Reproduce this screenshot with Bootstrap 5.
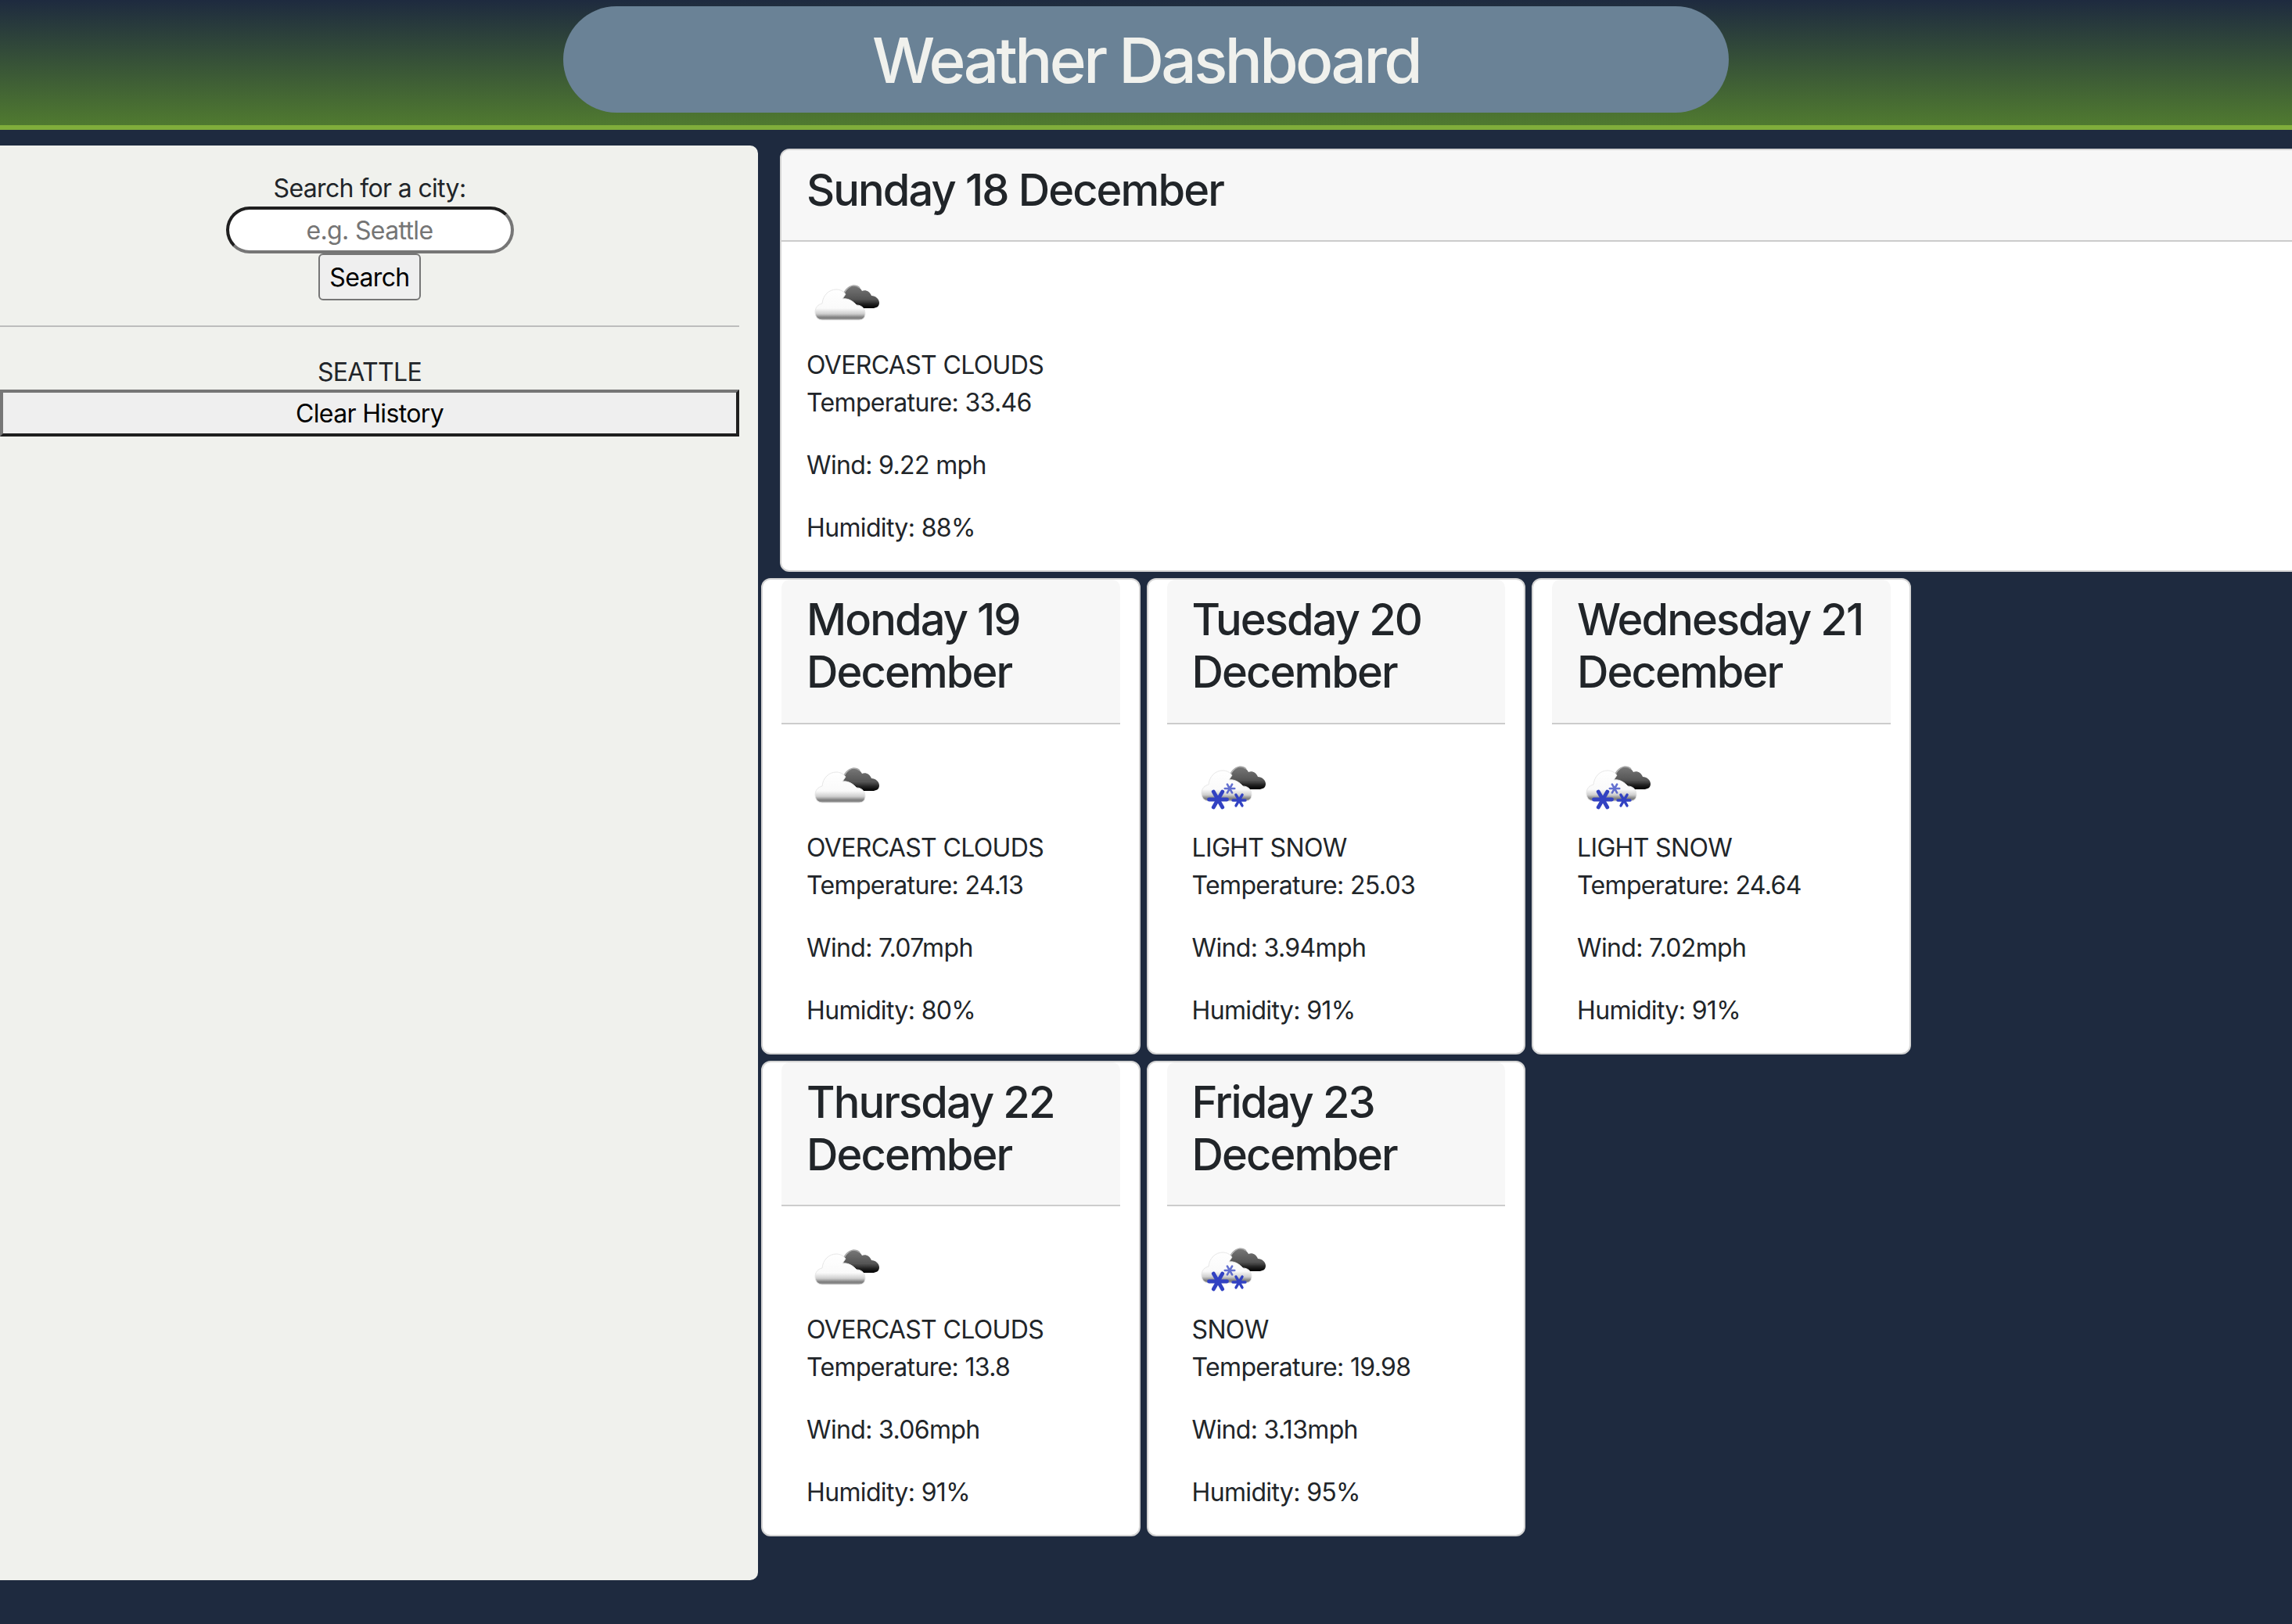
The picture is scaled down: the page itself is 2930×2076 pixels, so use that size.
<!DOCTYPE html>
<html lang="en">
  <head>
    <meta charset="UTF-8" />
    <meta name="viewport" content="width=device-width, initial-scale=1.0" />
    <title>Weather Dashboard</title>
    <link href="https://cdn.jsdelivr.net/npm/bootstrap@5.3.2/dist/css/bootstrap.min.css" rel="stylesheet" />
    <style>
      html {
        font-size: 32px;
        overflow-x: hidden;
      }
      body {
        background-color: #1e2a3f;
        color: #212529;
        font-family: Inter, "Liberation Sans", sans-serif;
        letter-spacing: -0.65px;
        overflow-x: hidden;
      }
      input,
      button {
        letter-spacing: inherit;
      }
      .page-head {
        height: 166px;
        background: linear-gradient(#1e2a3f, #507a30);
        border-bottom: 6px solid #80ae3b;
        padding-top: 8px;
      }
      .head-pill {
        width: 1490px;
        height: 136px;
        padding-top: 2px;
        background-color: #6a8296;
        color: #f0f1ed;
      }
      .head-pill h1 {
        font-size: 80px;
        font-weight: 550;
        letter-spacing: -3.6px;
      }
      .main-row {
        margin-top: 20px;
      }
      .side-panel {
        width: 969px;
        min-height: 1834px;
        padding: 31px 24px 0 0;
        background-color: #f0f1ed;
        border-radius: 0 10px 10px 0;
      }
      .side-panel label {
        margin-bottom: -1px;
      }
      .city-name {
        padding-top: 2px;
        margin-bottom: -2px;
      }
      .city-input {
        display: block;
        width: 368px;
        height: 60px;
        margin: 0 auto;
        border: 4px solid;
        border-color: #1f1f1f #767676 #767676 #1f1f1f;
        border-radius: 30px;
        background: #fff;
        text-align: center;
        font-size: 32px;
        line-height: 1;
        padding: 0 8px;
      }
      .city-input::placeholder {
        color: #757575;
      }
      .search-btn {
        display: block;
        width: 131px;
        height: 60px;
        margin: 0 auto;
        padding: 1px 0 0;
        border: 2px solid #767676;
        border-radius: 6px;
        background-color: #efefef;
        color: #000;
      }
      .side-rule {
        margin: 32px 0;
        border-top: 2px solid #bdbdbd;
        opacity: 1;
      }
      .clear-btn {
        display: block;
        width: 100%;
        height: 60px;
        padding: 2px 0 0;
        border: 4px solid;
        border-color: #767676 #1f1f1f #1f1f1f #767676;
        background-color: #efefef;
        color: #000;
      }
      .main-panel {
        padding: 4px 0 0 4px;
        min-width: 0;
      }
      .day-card {
        --bs-card-border-width: 2px;
        --bs-card-border-color: #d4d4d4;
        --bs-card-inner-border-radius: 10px;
        --bs-card-cap-bg: #f7f7f7;
        --bs-card-spacer-x: 32px;
        --bs-card-spacer-y: 32px;
        border-radius: 12px;
      }
      .day-card .card-header {
        padding-top: 18px;
        border-bottom: 2px solid #ccc;
      }
      .day-card h3 {
        margin-bottom: 14px;
        font-weight: 550;
        letter-spacing: -1.9px;
      }
      .day-card .card-body {
        padding-bottom: 30px;
      }
      .today-card {
        margin: 0 -40px 8px 24px;
      }
      .week-wrap {
        gap: 8px;
        max-width: 1480px;
      }
      .week-card {
        width: 484.5px;
      }
      .week-inner {
        margin: 0 24px;
      }
      .wx-icon {
        display: block;
        width: 100px;
        height: 100px;
        margin-bottom: 2px;
      }
      .wx-stats p:last-child {
        margin-bottom: 0;
      }
    </style>
  </head>
  <body>
    <!-- shared weather icons -->
    <svg width="0" height="0" class="position-absolute">
      <defs>
        <linearGradient id="whiteFill" x1="0" y1="0" x2="0" y2="1">
          <stop offset="0" stop-color="#fff" />
          <stop offset="0.62" stop-color="#fafafa" />
          <stop offset="0.8" stop-color="#cfcfcf" />
          <stop offset="0.92" stop-color="#7d7d7d" />
          <stop offset="1" stop-color="#9a9a9a" />
        </linearGradient>
        <linearGradient id="darkFill" x1="0" y1="0" x2="0" y2="1">
          <stop offset="0" stop-color="#777" />
          <stop offset="0.6" stop-color="#555" />
          <stop offset="0.85" stop-color="#1a1a1a" />
          <stop offset="1" stop-color="#000" />
        </linearGradient>
        <filter id="soft" x="-10%" y="-10%" width="120%" height="120%">
          <feGaussianBlur stdDeviation="0.7" />
        </filter>
        <g id="cloudPair">
          <path d="M46 41C48 32 54 25 60 24C65 24 69 27 71 31C76 29 81 32 83 37C88 37 93 41 93 46C93 51 89 53 84 53L68 53C62 47 56 41 46 41Z" fill="url(#darkFill)" />
          <path d="M44 41C47 32 53 25 60 24C63 24 66 25 68 27" fill="none" stroke="#a8a8a8" stroke-width="1.6" />
          <path d="M20 68C14 68 11 63 11 58C11 52 15 48 20 47C21 36 29 29 38 29C43 29 47 31 50 35L46 41C52 40 58 43 62 47L64 49C71 49 75 54 75 60C75 65 72 68 67 68Z" fill="url(#whiteFill)" stroke="#e6e6e6" stroke-width="1" />
        </g>
        <g id="flake" stroke="#3142c2" stroke-width="4.2" stroke-linecap="round">
          <line x1="-10" y1="0" x2="10" y2="0" />
          <line x1="-5" y1="-8.7" x2="5" y2="8.7" />
          <line x1="-5" y1="8.7" x2="5" y2="-8.7" />
          <circle cx="0" cy="0" r="3" fill="#3142c2" stroke="none" />
        </g>
        <symbol id="overcast" viewBox="0 0 100 100">
          <use href="#cloudPair" filter="url(#soft)" />
        </symbol>
        <symbol id="snowy" viewBox="0 0 100 100">
          <g filter="url(#soft)">
            <use href="#cloudPair" transform="translate(1 -2)" />
            <use href="#flake" transform="translate(33 64) scale(1.15)" />
            <use href="#flake" transform="translate(48 50) scale(0.62)" opacity="0.75" />
            <use href="#flake" transform="translate(60 65) scale(0.8)" />
          </g>
        </symbol>
      </defs>
    </svg>

    <!-- Header -->
    <header class="page-head">
      <div class="head-pill rounded-pill mx-auto d-flex align-items-center justify-content-center">
        <h1 class="mb-0">Weather Dashboard</h1>
      </div>
    </header>

    <div class="main-row d-flex">
      <!-- Search Panel -->
      <aside class="side-panel flex-shrink-0 text-center">
        <label for="cityInput" class="d-block">Search for a city:</label>
        <input id="cityInput" class="city-input" type="text" placeholder="e.g. Seattle" />
        <button class="search-btn" type="button">Search</button>
        <hr class="side-rule" />
        <div class="city-name">SEATTLE</div>
        <button class="clear-btn" type="button">Clear History</button>
      </aside>

      <!-- Forecast -->
      <main class="main-panel flex-grow-1">
        <div id="todayCard"></div>
        <div id="weekCards" class="week-wrap d-flex flex-wrap"></div>
      </main>
    </div>

    <script>
      const days = [
        { date: "Sunday 18 December", icon: "overcast", desc: "OVERCAST CLOUDS", temp: "33.46", wind: "9.22 mph", hum: "88%" },
        { date: "Monday 19 December", icon: "overcast", desc: "OVERCAST CLOUDS", temp: "24.13", wind: "7.07mph", hum: "80%" },
        { date: "Tuesday 20 December", icon: "snowy", desc: "LIGHT SNOW", temp: "25.03", wind: "3.94mph", hum: "91%" },
        { date: "Wednesday 21 December", icon: "snowy", desc: "LIGHT SNOW", temp: "24.64", wind: "7.02mph", hum: "91%" },
        { date: "Thursday 22 December", icon: "overcast", desc: "OVERCAST CLOUDS", temp: "13.8", wind: "3.06mph", hum: "91%" },
        { date: "Friday 23 December", icon: "snowy", desc: "SNOW", temp: "19.98", wind: "3.13mph", hum: "95%" },
      ];

      function cardInner(day) {
        return `
          <div class="card-header"><h3>${day.date}</h3></div>
          <div class="card-body">
            <svg class="wx-icon"><use href="#${day.icon}" /></svg>
            <div>${day.desc}</div>
            <div class="wx-stats">
              <p>Temperature: ${day.temp}</p>
              <p>Wind: ${day.wind}</p>
              <p>Humidity: ${day.hum}</p>
            </div>
          </div>`;
      }

      document.getElementById("todayCard").innerHTML =
        `<div class="card day-card today-card">${cardInner(days[0])}</div>`;

      document.getElementById("weekCards").innerHTML = days
        .slice(1)
        .map((day) => `<div class="card day-card week-card"><div class="week-inner">${cardInner(day)}</div></div>`)
        .join("");
    </script>
    <script src="https://cdn.jsdelivr.net/npm/bootstrap@5.3.2/dist/js/bootstrap.bundle.min.js"></script>
  </body>
</html>
